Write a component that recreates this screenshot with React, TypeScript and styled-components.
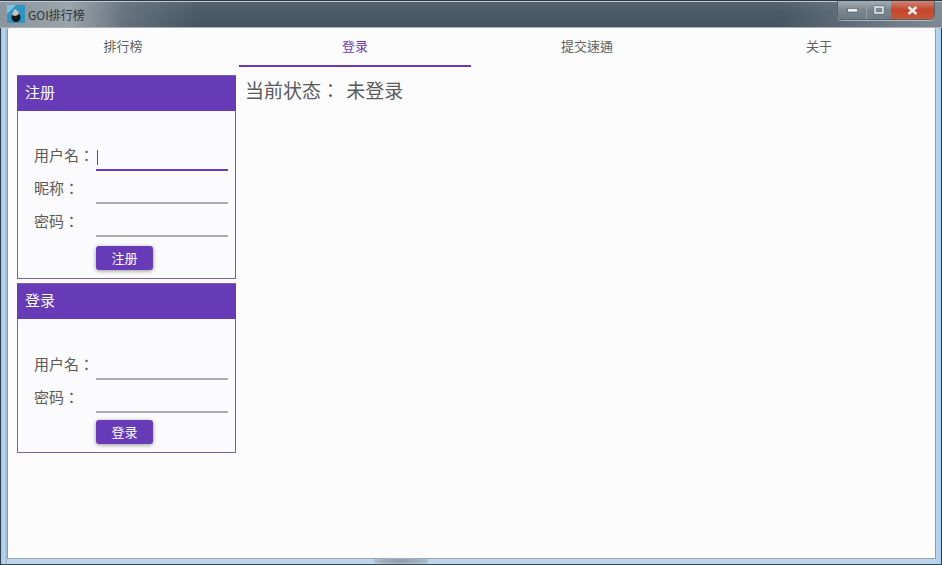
import React from 'react'
import styled, { createGlobalStyle } from 'styled-components'

const FONT = `'Noto Sans CJK TC', 'Liberation Sans', sans-serif`
const PURPLE = '#673ab7'

const GlobalStyle = createGlobalStyle`
  html, body {
    margin: 0;
    padding: 0;
    width: 942px;
    height: 565px;
    overflow: hidden;
    background: #9fc6e6;
  }
  * {
    box-sizing: border-box;
  }
`

const Win = styled.div`
  position: relative;
  width: 942px;
  height: 565px;
  display: flex;
  flex-direction: column;
  padding: 0 6px 6px 7px;
  font-family: ${FONT};
  background: linear-gradient(90deg, #2f3f4c 0, #2f3f4c 1px, #a3c6e4 1px, #bcd6f0 4px, #9db5cc 7px, #bcd6f0 7px, #bcd6f0 935px, #b6d2ee 938px, #a9cbe8 941px, #2f3f4c 941px);

  &::after {
    content: '';
    position: absolute;
    left: 374px;
    bottom: 1px;
    width: 54px;
    height: 6px;
    background: radial-gradient(ellipse at center, #8f99a8 0, #a3aebd 55%, rgba(188, 214, 240, 0) 100%);
  }

  &::before {
    content: '';
    position: absolute;
    left: 0;
    right: 0;
    bottom: 0;
    height: 1px;
    background: #2f4a50;
  }
`

const TitleBar = styled.div`
  height: 28px;
  flex: none;
  display: flex;
  align-items: flex-start;
  justify-content: space-between;
  margin-left: -7px;
  margin-right: -6px;
  padding-left: 7px;
  padding-right: 7px;
  border-top: 1px solid #2a3a48;
  box-shadow: inset 0 1px 0 #c3c9ce, inset 0 -1px 0 #aab2b8;
  background:
    linear-gradient(90deg, rgba(150, 160, 168, 0.85) 0, rgba(165, 172, 178, 0.9) 70px, rgba(120, 132, 142, 0.6) 125px, rgba(74, 88, 100, 0) 200px, rgba(74, 88, 100, 0) 780px, rgba(130, 140, 150, 0.5) 860px, rgba(150, 160, 168, 0.7) 100%),
    linear-gradient(180deg, #56646f 0, #4a5a68 40%, #44535f 100%);
`

const TitleLeft = styled.div`
  display: flex;
  align-items: center;
  gap: 3px;
  height: 26px;
`

const TitleText = styled.span`
  font-size: 12px;
  color: #2e3439;
`

const Controls = styled.div`
  display: flex;
  height: 19px;
  border: 1px solid #59636b;
  border-top: none;
  border-radius: 0 0 5px 5px;
  overflow: hidden;
  box-shadow: 0 1px 0 rgba(220, 228, 235, 0.55);
`

const Control = styled.div<{ $w: number; $danger?: boolean }>`
  width: ${p => p.$w}px;
  display: flex;
  align-items: center;
  justify-content: center;
  border-left: ${p => (p.$danger ? 'none' : '1px solid #98a2a9')};
  background: ${p =>
    p.$danger
      ? 'linear-gradient(180deg, #cf8574 0, #c4442c 50%, #c8583a 100%)'
      : 'linear-gradient(180deg, #a4aeb5 0, #7a868e 50%, #6f7c85 100%)'};
  &:first-child {
    border-left: none;
  }
`

const Client = styled.div`
  flex: 1;
  display: flex;
  flex-direction: column;
  min-height: 0;
  background: #fdfcfd;
  border: 1px solid #8e9ba3;
  border-bottom-color: #9aa8ae;
  border-top: none;
  border-radius: 2px 2px 0 0;
`

const Tabs = styled.div`
  display: grid;
  grid-template-columns: repeat(4, 232px);
  margin-left: -1px;
  height: 39px;
  flex: none;
`

const Tab = styled.div<{ $active?: boolean }>`
  display: flex;
  align-items: center;
  justify-content: center;
  padding-bottom: 3px;
  font-size: 13px;
  color: ${p => (p.$active ? PURPLE : '#5f5f5f')};
  border-bottom: 2px solid ${p => (p.$active ? PURPLE : 'transparent')};
`

const Body = styled.div`
  flex: 1;
  display: flex;
  gap: 9px;
  padding: 8px 0 0 9px;
`

const Side = styled.div`
  width: 219px;
  flex: none;
  display: flex;
  flex-direction: column;
  gap: 4px;
`

const Card = styled.div`
  border: 1px solid #7b5bb0;
  background: #fbfafc;
`

const CardHeader = styled.div`
  height: 35px;
  margin: 0 -1px;
  padding: 0 0 5px 8px;
  display: flex;
  align-items: center;
  background: ${PURPLE};
  color: #fff;
  font-size: 15px;
`

const CardBody = styled.div<{ $top: number }>`
  padding: ${p => p.$top}px 7px 8px 16px;
  display: flex;
  flex-direction: column;
`

const Row = styled.div`
  height: 33px;
  display: flex;
  align-items: center;
`

const Label = styled.label`
  width: 62px;
  flex: none;
  font-size: 15px;
  color: #5a5a5a;
  white-space: nowrap;
  padding-top: 1px;
`

const Field = styled.div<{ $focus?: boolean }>`
  flex: 1;
  height: 33px;
  position: relative;
  border-bottom: ${p => (p.$focus ? `2px solid ${PURPLE}` : '2px solid #ababab')};
  margin-bottom: -1px;
`

const Caret = styled.span`
  position: absolute;
  left: 1px;
  bottom: 4px;
  width: 1px;
  height: 15px;
  background: #555;
`

const Actions = styled.div<{ $top: number }>`
  padding: ${p => p.$top}px 0 0 62px;
`

const Button = styled.button`
  display: block;
  width: 57px;
  height: 24px;
  border: none;
  padding: 0 0 2px;
  border-radius: 3px;
  background: ${PURPLE};
  color: #fff;
  font-family: ${FONT};
  font-size: 13px;
  box-shadow: 0 1px 4px rgba(0, 0, 0, 0.4);
`

const Status = styled.div`
  font-size: 19px;
  line-height: 30px;
  color: #5a5a5a;
  white-space: pre;
  word-spacing: 2px;
`

const AppIcon = () => (
  <svg width="18" height="18" viewBox="0 0 18 18">
    <rect width="18" height="18" rx="1" fill="#2f95c4" />
    <path d="M0 0 H9 L0 9 Z" fill="#7fc4de" />
    <circle cx="9" cy="12.5" r="4.5" fill="#14181d" />
    <path d="M5 10 L7 5 L9 4 L10 6 L12 7 L11 10 L8 11 Z" fill="#c9c4bc" />
  </svg>
)

const MinIcon = () => (
  <svg width="11" height="6" viewBox="0 0 11 6">
    <rect x="0.5" y="1.5" width="10" height="3.5" fill="#eef1f3" stroke="#4b555c" strokeWidth="0.6" />
  </svg>
)

const MaxIcon = () => (
  <svg width="12" height="10" viewBox="0 0 12 10">
    <rect x="1" y="1" width="10" height="8" fill="none" stroke="#4b555c" strokeWidth="0.6" />
    <rect x="2" y="2" width="8" height="6" fill="none" stroke="#e3e7ea" strokeWidth="1.6" />
  </svg>
)

const CloseIcon = () => (
  <svg width="11" height="9" viewBox="0 0 11 9">
    <path d="M1.5 1 L9.5 8 M9.5 1 L1.5 8" stroke="#f5f0ec" strokeWidth="2.6" />
  </svg>
)

const tabs = ['排行榜', '登录', '提交速通', '关于']

export default function App() {
  return (
    <>
      <GlobalStyle />
      <Win>
        <TitleBar>
          <TitleLeft>
            <AppIcon />
            <TitleText>GOI排行榜</TitleText>
          </TitleLeft>
          <Controls>
            <Control $w={28}><MinIcon /></Control>
            <Control $w={25}><MaxIcon /></Control>
            <Control $w={43} $danger><CloseIcon /></Control>
          </Controls>
        </TitleBar>
        <Client>
          <Tabs>
            {tabs.map(t => (
              <Tab key={t} $active={t === '登录'}>{t}</Tab>
            ))}
          </Tabs>
          <Body>
            <Side>
              <Card>
                <CardHeader>注册</CardHeader>
                <CardBody $top={26}>
                  <Row>
                    <Label>用户名：</Label>
                    <Field $focus><Caret /></Field>
                  </Row>
                  <Row>
                    <Label>昵称：</Label>
                    <Field />
                  </Row>
                  <Row>
                    <Label>密码：</Label>
                    <Field />
                  </Row>
                  <Actions $top={10}><Button>注册</Button></Actions>
                </CardBody>
              </Card>
              <Card>
                <CardHeader>登录</CardHeader>
                <CardBody $top={27}>
                  <Row>
                    <Label>用户名：</Label>
                    <Field />
                  </Row>
                  <Row>
                    <Label>密码：</Label>
                    <Field />
                  </Row>
                  <Actions $top={8}><Button>登录</Button></Actions>
                </CardBody>
              </Card>
            </Side>
            <Status>当前状态： 未登录</Status>
          </Body>
        </Client>
      </Win>
    </>
  )
}
